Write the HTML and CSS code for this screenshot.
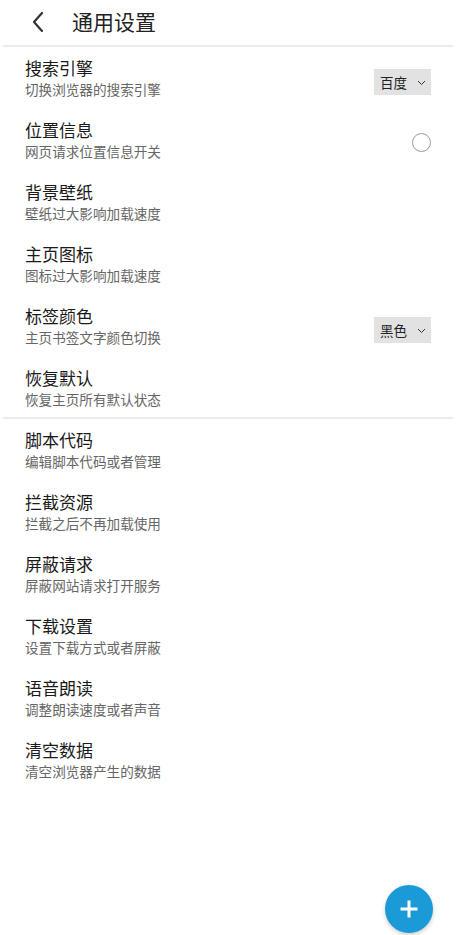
FILE: index.html
```html
<!DOCTYPE html>
<html lang="zh-CN">
<head>
<meta charset="utf-8">
<title>通用设置</title>
<link rel="stylesheet" href="styles.css">
</head>
<body>
<div class="page">
  <header class="header">
    <svg class="back" width="14" height="22" viewBox="0 0 14 22"><path d="M11 2 L3 11 L11 20" fill="none" stroke="#333" stroke-width="2.2" stroke-linecap="round" stroke-linejoin="round"/></svg>
    <h1 class="title">通用设置</h1>
  </header>
  <div class="divider"></div>
  <ul class="list">
    <li class="row">
      <div class="text"><div class="name">搜索引擎</div><div class="desc">切换浏览器的搜索引擎</div></div>
      <div class="select"><span>百度</span><svg width="9" height="6" viewBox="0 0 9 6"><path d="M1 1 L4.5 4.5 L8 1" fill="none" stroke="#333" stroke-width="1"/></svg></div>
    </li>
    <li class="row">
      <div class="text"><div class="name">位置信息</div><div class="desc">网页请求位置信息开关</div></div>
      <div class="radio"></div>
    </li>
    <li class="row">
      <div class="text"><div class="name">背景壁纸</div><div class="desc">壁纸过大影响加载速度</div></div>
    </li>
    <li class="row">
      <div class="text"><div class="name">主页图标</div><div class="desc">图标过大影响加载速度</div></div>
    </li>
    <li class="row">
      <div class="text"><div class="name">标签颜色</div><div class="desc">主页书签文字颜色切换</div></div>
      <div class="select"><span>黑色</span><svg width="9" height="6" viewBox="0 0 9 6"><path d="M1 1 L4.5 4.5 L8 1" fill="none" stroke="#333" stroke-width="1"/></svg></div>
    </li>
    <li class="row last">
      <div class="text"><div class="name">恢复默认</div><div class="desc">恢复主页所有默认状态</div></div>
    </li>
  </ul>
  <div class="divider"></div>
  <ul class="list">
    <li class="row"><div class="text"><div class="name">脚本代码</div><div class="desc">编辑脚本代码或者管理</div></div></li>
    <li class="row"><div class="text"><div class="name">拦截资源</div><div class="desc">拦截之后不再加载使用</div></div></li>
    <li class="row"><div class="text"><div class="name">屏蔽请求</div><div class="desc">屏蔽网站请求打开服务</div></div></li>
    <li class="row"><div class="text"><div class="name">下载设置</div><div class="desc">设置下载方式或者屏蔽</div></div></li>
    <li class="row"><div class="text"><div class="name">语音朗读</div><div class="desc">调整朗读速度或者声音</div></div></li>
    <li class="row"><div class="text"><div class="name">清空数据</div><div class="desc">清空浏览器产生的数据</div></div></li>
  </ul>
  <button class="fab" aria-label="添加"><svg width="20" height="20" viewBox="0 0 20 20"><path d="M10 1.5 V18.5 M1.5 10 H18.5" stroke="#fff" stroke-width="3"/></svg></button>
</div>
</body>
</html>
```
FILE: styles.css
```css
html, body {
  margin: 0;
  padding: 0;
  background: #fff;
}
body {
  font-family: "Noto Sans CJK SC", "Noto Sans", sans-serif;
  color: #1a1a1a;
}
.page {
  width: 460px;
  height: 935px;
  position: relative;
}
.header {
  height: 45px;
  display: flex;
  align-items: center;
  padding-left: 31px;
}
.back {
  display: block;
  margin-top: -1px;
}
.title {
  margin: -2px 0 0 27px;
  font-size: 21px;
  font-weight: 400;
  line-height: 1;
  color: #222;
}
.divider {
  height: 2px;
  background: #ececec;
  margin: 0 7px 0 3px;
}
.list {
  list-style: none;
  margin: 0;
  padding: 0;
}
.row {
  display: flex;
  justify-content: space-between;
  align-items: flex-start;
  height: 62px;
  box-sizing: border-box;
  padding: 10px 29px 10px 25px;
}
.row.last {
  height: 60px;
}
.name {
  font-size: 17px;
  line-height: 22px;
  color: #1a1a1a;
}
.desc {
  font-size: 13.6px;
  line-height: 20px;
  color: #666;
}
.select {
  margin-top: 12px;
  width: 57px;
  height: 26px;
  box-sizing: border-box;
  background: #e2e2e2;
  display: flex;
  align-items: center;
  justify-content: space-between;
  padding: 0 5px 0 6px;
  font-size: 13.5px;
  color: #222;
}
.select svg {
  margin-top: 2px;
}
.radio {
  margin-top: 14px;
  width: 19px;
  height: 19px;
  box-sizing: border-box;
  border: 1px solid #9a9a9a;
  border-radius: 50%;
}
.fab {
  position: absolute;
  right: 27px;
  top: 885px;
  width: 48px;
  height: 48px;
  border: none;
  border-radius: 50%;
  background: #1b9ad8;
  box-shadow: 0 2px 4px rgba(0,0,0,0.2);
  display: flex;
  align-items: center;
  justify-content: center;
  padding: 0;
}
.fab svg {
  display: block;
}
```
